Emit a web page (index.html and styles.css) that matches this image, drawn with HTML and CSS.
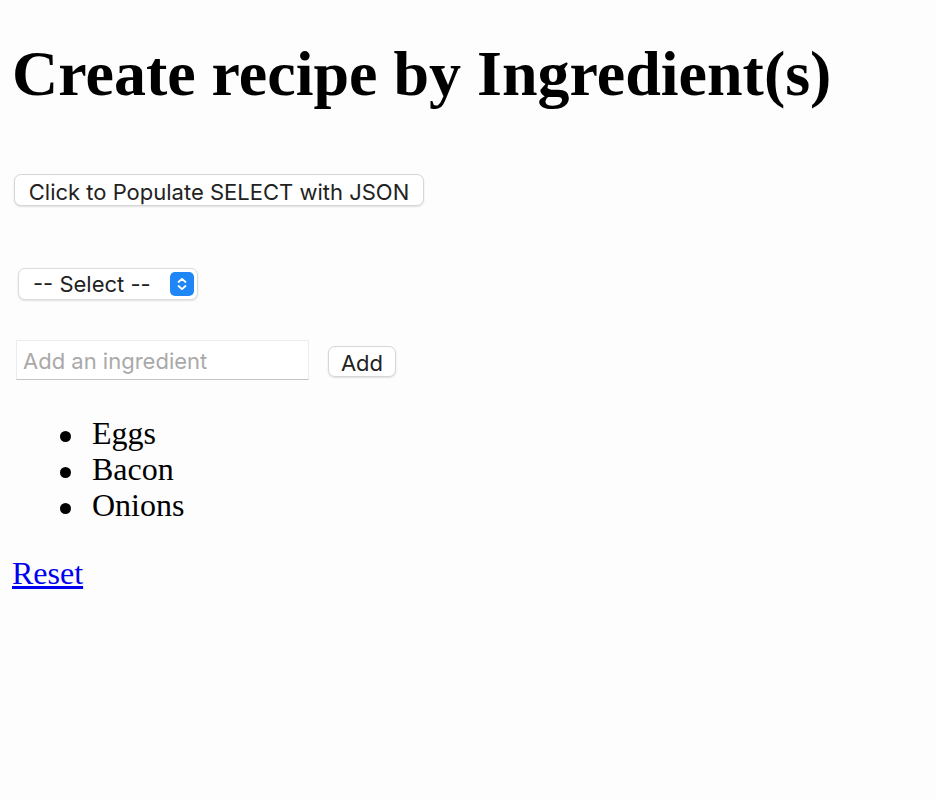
FILE: index.html
```html
<!DOCTYPE html>
<html lang="en">
<head>
<meta charset="utf-8">
<title>Create recipe by Ingredient(s)</title>
<link rel="stylesheet" href="styles.css">
</head>
<body>
<h1 class="title">Create recipe by Ingredient(s)</h1>
<div class="row row-populate">
  <button class="btn btn-populate" type="button">Click to Populate SELECT with JSON</button>
</div>
<div class="row row-select">
  <div class="select-wrap">
    <select class="select">
      <option>-- Select --</option>
    </select>
    <span class="stepper">
      <svg width="24" height="24" viewBox="0 0 24 24" aria-hidden="true">
        <rect x="0" y="0" width="24" height="24" rx="5" fill="#1f86f5"/>
        <path d="M8.5 10 L12 6.8 L15.5 10" fill="none" stroke="#fff" stroke-width="1.8" stroke-linecap="round" stroke-linejoin="round"/>
        <path d="M8.5 14 L12 17.2 L15.5 14" fill="none" stroke="#fff" stroke-width="1.8" stroke-linecap="round" stroke-linejoin="round"/>
      </svg>
    </span>
  </div>
</div>
<div class="row row-add">
  <input class="input" type="text" placeholder="Add an ingredient">
  <button class="btn btn-add" type="button">Add</button>
</div>
<ul class="list">
  <li class="item">Eggs</li>
  <li class="item">Bacon</li>
  <li class="item">Onions</li>
</ul>
<p class="reset-line"><a class="reset" href="#">Reset</a></p>
</body>
</html>
```
FILE: styles.css
```css
html {
  background: #fdfdfd;
}
body {
  margin: 12px;
  font-family: "Liberation Serif", "Times New Roman", serif;
  font-size: 32px;
  color: #000;
  background: #fdfdfd;
}
.title {
  margin: 25px 0 0;
  font-size: 64px;
  line-height: 74px;
  font-weight: bold;
}
.row {
  display: flex;
  align-items: center;
}
.row-populate {
  margin-top: 63px;
  padding-left: 2px;
}
.btn {
  font-family: Inter, "Liberation Sans", sans-serif;
  font-size: 22px;
  color: #222;
  background: #fff;
  border: 1px solid #d6d6d6;
  border-radius: 7px;
  box-shadow: 0 1px 2px rgba(0,0,0,0.12);
  padding: 0;
  margin: 0;
  box-sizing: border-box;
  cursor: default;
}
.btn-populate {
  width: 410px;
  height: 32px;
  padding-top: 4px;
}
.row-select {
  margin-top: 62px;
  padding-left: 6px;
}
.select-wrap {
  display: inline-flex;
  align-items: center;
  box-sizing: border-box;
  width: 180px;
  height: 32px;
  background: #fff;
  border: 1px solid #dcdcdc;
  border-radius: 7px;
  box-shadow: 0 1px 2px rgba(0,0,0,0.12);
  padding: 0 3px 0 14px;
}
.select {
  -webkit-appearance: none;
  appearance: none;
  flex: 1;
  border: none;
  background: transparent;
  font-family: Inter, "Liberation Sans", sans-serif;
  font-size: 22px;
  color: #222;
  padding: 0;
  margin: 0;
  outline: none;
}
.stepper {
  display: flex;
  width: 24px;
  height: 24px;
}
.row-add {
  margin-top: 40px;
  padding-left: 4px;
  gap: 19px;
}
.input {
  box-sizing: border-box;
  width: 293px;
  height: 40px;
  margin: 0;
  padding: 2px 6px 0;
  font-family: Inter, "Liberation Sans", sans-serif;
  font-size: 22px;
  color: #222;
  background: #fff;
  border: 1px solid #ececec;
  border-bottom: 1px solid #c4c4c4;
  border-radius: 0;
  outline: none;
}
.input::placeholder {
  color: #a9a9a9;
}
.btn-add {
  width: 68px;
  height: 31px;
  margin-top: 3px;
  padding-top: 3px;
}
.list {
  margin: 35px 0 0;
  padding-left: 80px;
  line-height: 36px;
  list-style: none;
}
.item::before {
  content: "";
  display: inline-block;
  vertical-align: middle;
  width: 11px;
  height: 11px;
  border-radius: 50%;
  background: #000;
  margin-left: -32px;
  margin-right: 21px;
}
.reset-line {
  margin: 32px 0 0;
  line-height: 36px;
}
.reset {
  color: #0000ee;
  text-decoration: underline;
}
```
